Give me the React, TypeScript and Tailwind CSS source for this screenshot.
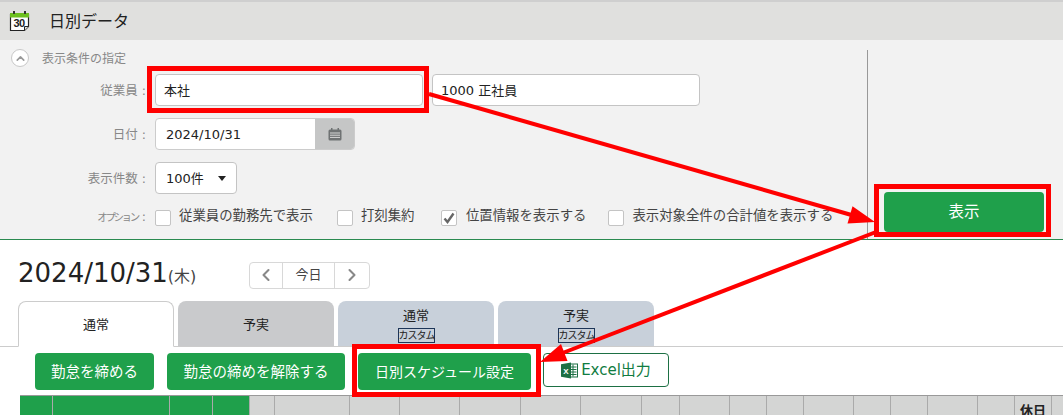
import { ChevronLeft, ChevronRight, ChevronUp } from 'lucide-react';

const font = { fontFamily: '"DejaVu Sans", "Noto Sans CJK JP", sans-serif' };

// table columns: width, green or grey, first line of the header if it shows
const columns: { w: number; green?: boolean; label?: string; top?: boolean; red?: boolean }[] = [
  { w: 33, green: true },
  { w: 117, green: true },
  { w: 43, green: true },
  { w: 37, green: true },
  { w: 25 },
  { w: 75 },
  { w: 50, label: '十' },
  { w: 60 },
  { w: 61 },
  { w: 60 },
  { w: 61 },
  { w: 38 },
  { w: 50 },
  { w: 37 },
  { w: 37, label: '十' },
  { w: 50, label: '十', red: true },
  { w: 37, label: '十' },
  { w: 37 },
  { w: 50 },
  { w: 37 },
  { w: 37, label: '休日', top: true },
  { w: 12 },
];

function CalendarLogo() {
  return (
    <svg width="22" height="22" viewBox="0 0 22 22" className="shrink-0">
      <path d="M1.5 4.5h18v12l-4 4h-14z" fill="#fff" stroke="#222" strokeWidth="1.2" />
      <rect x="1" y="3" width="19" height="4.5" fill="#6cc01f" />
      <rect x="4" y="1" width="2" height="3" fill="#333" />
      <rect x="15" y="1" width="2" height="3" fill="#333" />
      <path d="M15.5 20.5v-4h4" fill="#ddd" stroke="#222" strokeWidth="1" />
      <text x="10" y="16.5" textAnchor="middle" fontSize="11" fontWeight="700" fill="#222" fontFamily="Liberation Sans" letterSpacing="-0.5">30</text>
    </svg>
  );
}

function SmallCalendar() {
  return (
    <svg width="14" height="13" viewBox="0 0 14 13">
      <rect x="0.5" y="1.5" width="13" height="11" rx="1.5" fill="#6f7273" />
      <rect x="3" y="0" width="1.5" height="3" fill="#6f7273" />
      <rect x="9.5" y="0" width="1.5" height="3" fill="#6f7273" />
      <path d="M2 5h10M2 7.2h10M2 9.4h10" stroke="#d8d8d8" strokeWidth="1" />
    </svg>
  );
}

function ExcelIcon() {
  return (
    <svg width="17" height="17" viewBox="0 0 17 17" className="shrink-0">
      <rect x="8" y="2" width="8.5" height="13" fill="#fff" stroke="#1d7044" />
      <path d="M9 5h6.5M9 7.5h6.5M9 10h6.5M9 12.5h6.5M12 2.5v12" stroke="#1d7044" strokeWidth="1" />
      <path d="M0 2.2 10 .5v16L0 14.8z" fill="#1d7044" />
      <text x="5" y="11.5" textAnchor="middle" fontSize="8" fontWeight="700" fill="#fff" fontFamily="Liberation Sans">X</text>
    </svg>
  );
}

function Checkbox({ label, checked, className }: { label: string; checked?: boolean; className?: string }) {
  return (
    <div className={`flex items-center h-[16px] ${checked ? 'gap-[9px]' : 'gap-[8px]'} ${className ?? ''}`}>
      <div className="w-[16px] h-[16px] shrink-0 bg-white border border-[#c4c4c4] rounded-[2px] flex items-center justify-center">
        {checked && (
          <svg width="12" height="12" viewBox="0 0 12 12">
            <path d="M1.5 6.5 4.5 10 10.5 1.5" fill="none" stroke="#666" strokeWidth="2.4" />
          </svg>
        )}
      </div>
      <span className="text-[13.4px] text-[#444] whitespace-nowrap mb-[3px]">{label}</span>
    </div>
  );
}

function Label({ children, small }: { children: string; small?: boolean }) {
  return (
    <div className={`w-[146px] shrink-0 text-right text-[#888] ${small ? 'text-[12.5px] mb-[2px]' : 'text-[12.5px] pt-[2px]'}`}>
      <span className={small ? 'text-[10.5px] tracking-[-2.4px]' : ''}>{children}</span>
      <span className="ml-[4px]">:</span>
    </div>
  );
}

function Tab({ title, custom, active, blue }: { title: string; custom?: boolean; active?: boolean; blue?: boolean }) {
  const bg = active
    ? 'bg-white border border-[#ccc] border-b-white -mb-px h-[46px]'
    : blue
      ? 'bg-[#c8d0da] h-[45px]'
      : 'bg-[#c9cacc] h-[45px]';
  return (
    <div className={`w-[156px] rounded-t-[8px] flex flex-col items-center text-[13px] text-[#222] ${custom ? 'pt-[6px]' : 'justify-center pt-[2px]'} ${bg}`}>
      <span className="leading-[18px]">{title}</span>
      {custom && (
        <span className="border border-[#1d3557] text-[10px] leading-[13px] w-[37px] mt-[3px] tracking-[-1px] text-center whitespace-nowrap">カスタム</span>
      )}
    </div>
  );
}

function ActionButton({ children, width, tight }: { children: string; width: string; tight?: boolean }) {
  return (
    <button className={`h-[37px] ${width} bg-[#1fa04b] rounded-[4px] text-white whitespace-nowrap pt-[2px] ${tight ? 'text-[14px]' : 'text-[14.5px]'}`}>
      {children}
    </button>
  );
}

function Annotations() {
  return (
    <svg width="1063" height="415" className="absolute left-0 top-0 pointer-events-none">
      <g fill="none" stroke="#ff0000" strokeWidth="5">
        <rect x="149.5" y="68.5" width="277" height="42" />
        <rect x="876.5" y="186.5" width="172" height="48" />
        <rect x="354.5" y="346.5" width="184" height="48" />
      </g>
      <g stroke="#ff0000" strokeWidth="4">
        <line x1="429" y1="94" x2="855" y2="216" />
        <line x1="876" y1="232" x2="560" y2="354" />
      </g>
      <polygon points="875,222 852.5,206.2 847.5,223.4" fill="#ff0000" />
      <polygon points="540,362 561,344 567.5,361" fill="#ff0000" />
    </svg>
  );
}

export default function App() {
  return (
    <div className="relative w-[1063px] h-[415px] overflow-hidden bg-white" style={font}>
      {/* title bar */}
      <div className="h-[40px] bg-[#e0e0de] border-t-2 border-[#cfcfcf] flex items-center pl-[9px]">
        <CalendarLogo />
        <span className="ml-[18px] text-[16px] text-[#222] pt-[2px]">日別データ</span>
      </div>

      {/* search conditions */}
      <div className="h-[200px] bg-[#f2f2f2] border-b border-[#2a8a50] flex">
        <div className="w-[868px] mt-[10px] border-r border-[#999] shrink-0">
          <div className="flex items-center -mt-px h-[18px] pl-[11px]">
            <div className="w-[18px] h-[18px] rounded-full bg-white border border-[#c8c8c8] flex items-center justify-center">
              <ChevronUp size={13} strokeWidth={3} className="text-[#999]" />
            </div>
            <span className="ml-[13px] text-[12px] text-[#888] pt-[1px]">表示条件の指定</span>
          </div>

          <div className="flex items-center mt-[7px]">
            <Label>従業員</Label>
            <div className="ml-[9px] w-[268px] h-[32px] bg-white border border-[#c4c4c4] rounded-[4px] flex items-center pl-[8px] pt-[2px] text-[13px] text-[#222]">本社</div>
            <div className="ml-[9px] w-[268px] h-[32px] bg-white border border-[#c4c4c4] rounded-[4px] flex items-center pl-[8px] pt-[2px] text-[13px] text-[#222]">1000 正社員</div>
          </div>

          <div className="flex items-center mt-[12px]">
            <Label>日付</Label>
            <div className="ml-[9px] w-[200px] h-[32px] bg-white border border-[#ccc] rounded-[4px] flex overflow-hidden">
              <div className="flex-1 flex items-center pl-[10px] pt-[2px] text-[13px] text-[#222]">2024/10/31</div>
              <div className="w-[39px] bg-[#c5c6c6] flex items-center justify-center">
                <SmallCalendar />
              </div>
            </div>
          </div>

          <div className="flex items-center mt-[12px]">
            <Label>表示件数</Label>
            <div className="ml-[9px] w-[82px] h-[32px] bg-white border border-[#c4c4c4] rounded-[4px] flex items-center justify-between pl-[10px] pr-[10px] text-[13px] text-[#222]">
              <span className="pt-[2px]">100件</span>
              <span className="w-0 h-0 border-x-[4px] border-x-transparent border-t-[5px] border-t-[#222]" />
            </div>
          </div>

          <div className="flex items-center mt-[16px] h-[16px]">
            <Label small>オプション</Label>
            <Checkbox label="従業員の勤務先で表示" className="ml-[9px]" />
            <Checkbox label="打刻集約" className="ml-[24px] w-[79px]" />
            <Checkbox label="位置情報を表示する" checked className="ml-[25px]" />
            <Checkbox label="表示対象全件の合計値を表示する" className="ml-[22px]" />
          </div>
        </div>

        <div className="flex-1 flex items-end pl-[16px] pb-[7px]">
          <button className="w-[160px] h-[40px] bg-[#1fa04b] rounded-[4px] text-white text-[15.5px] pt-[2px]">表示</button>
        </div>
      </div>

      {/* date heading */}
      <div className="flex items-center pl-[18px] mt-[22px] h-[26px]">
        <div className="w-[231px] flex items-baseline text-[#222] -mt-[3px]">
          <span className="text-[26px]">2024/10/31</span>
          <span className="text-[16px] text-[#444]">(木)</span>
        </div>
        <div className="flex h-[27px] border border-[#d8d8d8] rounded-[4px] text-[#444]">
          <div className="w-[33px] flex items-center justify-center border-r border-[#d8d8d8]">
            <ChevronLeft size={20} strokeWidth={2.5} className="text-[#888]" />
          </div>
          <div className="w-[52px] flex items-center justify-center border-r border-[#d8d8d8] text-[13px]">今日</div>
          <div className="w-[34px] flex items-center justify-center">
            <ChevronRight size={20} strokeWidth={2.5} className="text-[#888]" />
          </div>
        </div>
      </div>

      {/* tabs */}
      <div className="flex items-end gap-[4px] pl-[18px] mt-[13px] border-b border-[#ccc]">
        <Tab title="通常" active />
        <Tab title="予実" />
        <Tab title="通常" custom blue />
        <Tab title="予実" custom blue />
      </div>

      {/* actions */}
      <div className="flex items-start pl-[35px] mt-[6px]">
        <ActionButton width="w-[119px]">勤怠を締める</ActionButton>
        <div className="ml-[13px]"><ActionButton width="w-[178px]">勤怠の締めを解除する</ActionButton></div>
        <div className="ml-[13px]"><ActionButton width="w-[173px]" tight>日別スケジュール設定</ActionButton></div>
        <button className="ml-[12px] w-[126px] h-[34px] border border-[#1d7044] rounded-[4px] bg-white text-[#107c41] text-[15px] flex items-center justify-center gap-[3px]">
          <ExcelIcon />
          Excel出力
        </button>
      </div>

      {/* table header, only the top of it is in the picture */}
      <div className="flex mt-[5px] ml-[20px] border-t border-[#999] h-[40px]">
        {columns.map((col, i) => (
          <div
            key={i}
            style={{ width: col.w }}
            className={`shrink-0 border-r border-[#aaa] text-center text-[13px] font-bold ${col.green ? 'bg-[#1fa04b]' : 'bg-[#d4d5d4]'} ${col.red ? 'text-[#d22]' : 'text-[#222]'} ${col.top ? 'pt-[5px]' : 'pt-[16px] pl-[12px]'}`}
          >
            {col.label}
          </div>
        ))}
      </div>

      <Annotations />
    </div>
  );
}
